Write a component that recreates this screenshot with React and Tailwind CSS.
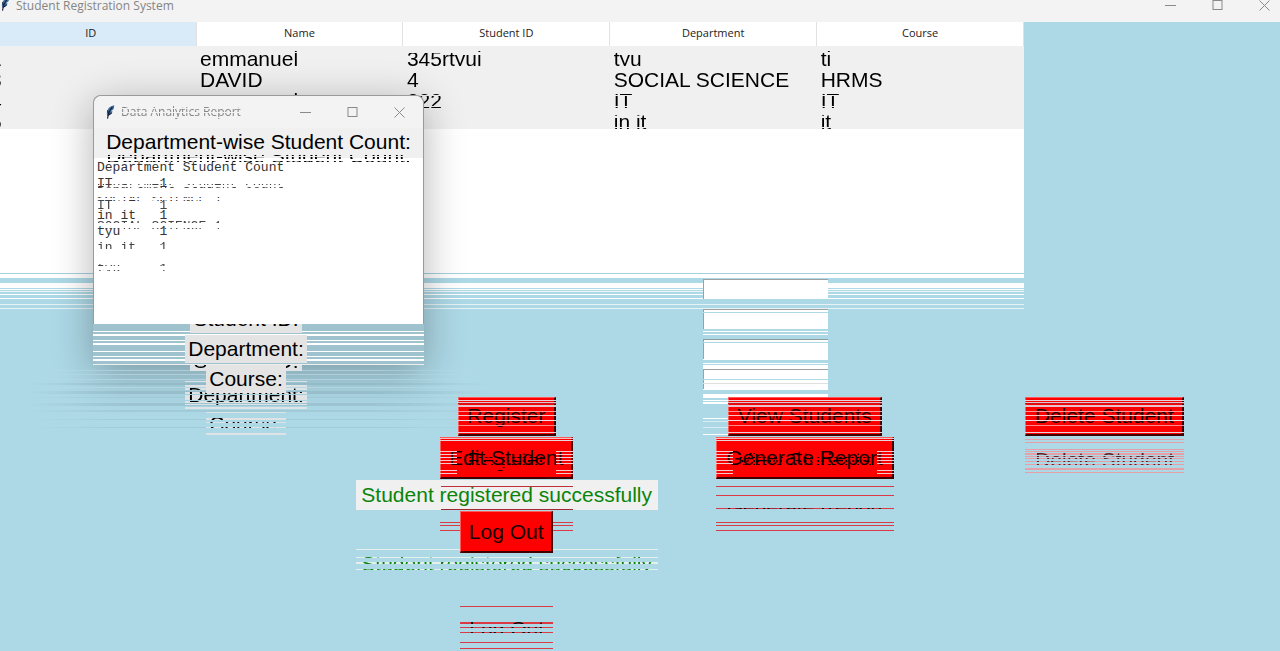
import React from "react";

const SKY = "#add8e6";

/* Keeps only the given [start, end] pixel bands of an element visible. */
function bands(list) {
  const stops = [];
  let at = 0;
  list.forEach(([a, b]) => {
    stops.push(`transparent ${at}px`, `transparent ${a}px`, `#000 ${a}px`, `#000 ${b}px`);
    at = b;
  });
  stops.push(`transparent ${at}px`);
  const image = `linear-gradient(to bottom, ${stops.join(", ")})`;
  return { maskImage: image, WebkitMaskImage: image };
}

/* Thin horizontal lines: rows of [y, height, colour]. */
function Lines({ className, rows }) {
  return (
    <svg aria-hidden="true" className={`pointer-events-none absolute ${className}`} shapeRendering="crispEdges">
      {rows.map(([y, h, fill], i) => (
        <rect key={i} x="0" y={y} width="100%" height={h} fill={fill} />
      ))}
    </svg>
  );
}

function Feather({ className }) {
  return (
    <svg aria-hidden="true" viewBox="0 0 12 16" className={className}>
      <path d="M11 0C7 1 4 3 3 6c-1 3-1 5 0 7l1-1c3-1 5-3 5-5L7 7l3-2c1-2 1-3 1-5z" fill="#3f6f9f" />
      <path d="M9 2C6 5 4 9 3 16M3 6l1 3M4 12l4-3" stroke="#14213a" strokeWidth="1.3" fill="none" />
    </svg>
  );
}

function WindowControls({ className }) {
  const icon = "block size-[11px]";
  return (
    <div className={`flex gap-9 text-[#8a8a8a] ${className}`}>
      <button type="button" aria-label="Minimize">
        <svg viewBox="0 0 11 11" className={icon}><path d="M0 5.5h11" stroke="currentColor" /></svg>
      </button>
      <button type="button" aria-label="Maximize">
        <svg viewBox="0 0 11 11" className={icon}><rect x="1" y="0.5" width="9" height="9" stroke="currentColor" fill="none" /></svg>
      </button>
      <button type="button" aria-label="Close">
        <svg viewBox="0 0 11 11" className={icon}><path d="M0.5 0.5l10 10M10.5 0.5l-10 10" stroke="currentColor" fill="none" /></svg>
      </button>
    </div>
  );
}

const columns = ["ID", "Name", "Student ID", "Department", "Course"];
const students = [
  ["1", "emmanuel", "345rtyui", "tyu", "ti"],
  ["3", "DAVID", "4", "SOCIAL SCIENCE", "HRMS"],
  ["4", "emmanuel", "222", "IT", "IT"],
  ["5", "", "", "in it", "it"],
];
const rowBands = [
  [[3, 4], [5, 18]],
  [[0, 21]],
  [[1, 5], [6, 16], [17, 18], [19, 20]],
  [[0, 3], [4, 16], [17, 18]],
];

function StudentTable() {
  return (
    <div className="relative w-4/5">
      <div className="h-[251px] overflow-hidden bg-white">
        <table className="-ml-[14px] w-[calc(100%+14px)] table-fixed border-collapse">
          <colgroup>
            <col className="w-[210px]" />
            <col /><col /><col /><col />
          </colgroup>
          <thead>
            <tr className="h-[25px]">
              {columns.map((c, i) => (
                <th
                  key={c}
                  className={`border-r border-b-2 border-r-[#e2e2e2] border-b-[#f0f0f0] p-0 pb-[2px] text-center font-['Open_Sans',sans-serif] text-[11px] leading-[20px] font-normal text-[#222] ${i === 0 ? "bg-[#d9ebf9]" : "bg-white"}`}
                >
                  {c}
                </th>
              ))}
            </tr>
          </thead>
          <tbody className="bg-[#f0f0f0]">
            {students.map((row, r) => (
              <tr key={r}>
                {row.map((cell, c) => (
                  <td key={c} className="p-0 pl-1 text-[21px] leading-[21px] whitespace-nowrap">
                    <span className={`block ${r === 3 ? "h-[18px]" : "h-[21px]"}`} style={bands(rowBands[r])}>{cell}</span>
                  </td>
                ))}
              </tr>
            ))}
          </tbody>
        </table>
      </div>
      <Lines
        className="top-full left-0 h-9 w-full"
        rows={[[0, 1, "#a3d0df"], [1, 4, "#fff"], [10, 5, "#fff"], [16, 1, "#fff"], [18, 1, "#eef6f9"], [21, 1, "#fff"], [25, 1, "#fff"], [31, 1, "#e6f2f6"], [35, 1, "#e6f2f6"]]}
      />
    </div>
  );
}

function FieldLabel({ id, children, slices, echo }) {
  return (
    <label
      htmlFor={id}
      className="relative flex h-7 items-center justify-self-center bg-[#e4e4e4] px-[3px] text-[21px] leading-6"
    >
      {children}
      {slices && (
        <span
          aria-hidden="true"
          className={`absolute left-0 flex h-7 w-full items-center bg-[#dfe3e5] px-[3px] ${echo}`}
          style={bands(slices)}
        >
          {children}
        </span>
      )}
    </label>
  );
}

function Field({ id, lines }) {
  return (
    <div className="relative flex h-7 w-[125px] items-center justify-self-center">
      <input id={id} className="h-5 w-full border-t border-l border-[#a0a0a0] bg-white px-1 outline-none" />
      {lines && <Lines className="top-0 left-0 h-20 w-full" rows={lines} />}
    </div>
  );
}

function Fields() {
  return (
    <div className="mt-[2px] grid grid-cols-[492fr_546fr_242fr] gap-y-[2px]">
      <FieldLabel id="name">Name:</FieldLabel>
      <Field id="name" />
      <span />
      <FieldLabel id="student-id" echo="top-[42px]" slices={[[18, 24]]}>Student ID:</FieldLabel>
      <Field id="student-id" lines={[[7, 1, SKY], [26, 1, "#fff"], [29, 1, "#fff"]]} />
      <span />
      <FieldLabel
        id="department"
        echo="top-[46px]"
        slices={[[0, 1], [4, 6], [7, 9], [11, 13], [14, 19], [20, 22], [23, 24], [26, 28]]}
      >
        Department:
      </FieldLabel>
      <Field id="department" lines={[[4, 1, "#8d9a9e"], [7, 1, SKY], [24, 1, "#fff"], [28, 1, "#fff"], [30, 4, "#fff"]]} />
      <span />
      <FieldLabel
        id="course"
        echo="top-[45px]"
        slices={[[2, 3], [8, 10], [12, 13], [17, 18], [23, 25], [29, 30]]}
      >
        Course:
      </FieldLabel>
      <Field
        id="course"
        lines={[[1, 3, "#fff"], [14, 1, SKY], [18, 1, "#e0e0e0"], [24, 1, "#fff"], [29, 4, "#fff"], [35, 1, "#fff"], [37, 2, "#fff"], [53, 1, "#fff"], [56, 1, "#d8ecf3"], [62, 1, "#d8ecf3"], [69, 1, "#fff"]]}
      />
      <span />
    </div>
  );
}

function ActionButton({ children, tall, width, lines, combs, echo, slices, faded }) {
  return (
    <div className={`relative flex justify-self-center ${width} ${tall ? "h-[42px]" : "h-[39px]"}`}>
      {slices && (
        <span
          aria-hidden="true"
          className={`absolute left-0 flex h-[42px] w-full items-center justify-center whitespace-nowrap ${echo} ${faded}`}
          style={bands(slices)}
        >
          {children}
        </span>
      )}
      <button
        type="button"
        className="relative w-full border-t border-r-2 border-b-2 border-l border-t-[#ff5a5a] border-r-[#400000] border-b-[#400000] border-l-[#ff5a5a] bg-[#ff0000] text-[21px] leading-6 whitespace-nowrap text-[#1a0000]"
      >
        {children}
      </button>
      {lines && <Lines className="top-0 left-0 h-full w-full" rows={lines} />}
      {combs && <Lines className="top-0 left-0 h-full w-[17px]" rows={combs} />}
      {combs && <Lines className="top-0 right-0 h-full w-[17px]" rows={combs} />}
    </div>
  );
}

const topLines = [
  [3, 1, "#e6d3da"], [5, 1, "#e6c3cc"], [6, 1, "#c01820"], [8, 2, "#e6c3cc"], [14, 1, "#ff9a9a"], [18, 1, "#ffc4c4"],
  [23, 1, "#f3dde2"], [28, 1, "#ff8a8a"], [35, 1, "#e6d3da"],
];
const tallLines = [[1, 1, "#f3c3c8"], [3, 1, "#e8d5da"]];
const combLines = [[14, 1, "#f4c9ce"], [17, 1, "#f4c9ce"], [20, 1, "#e8d5da"], [23, 1, "#f4c9ce"], [26, 1, "#f4c9ce"], [33, 1, "#f4c9ce"], [36, 1, "#f4c9ce"]];
const farSlices = [[7, 8], [16, 17], [29, 30], [43, 44], [46, 47], [51, 52]];

function EchoText({ children, className, slices }) {
  return (
    <span
      aria-hidden="true"
      className={`pointer-events-none absolute left-0 z-10 flex h-6 w-full items-center justify-center text-[21px] leading-6 whitespace-nowrap ${className}`}
      style={bands(slices)}
    >
      {children}
    </span>
  );
}

const midSlices = [[5, 7], [9, 10], [12, 14], [16, 17], [19, 20], [22, 23]];

function Actions() {
  return (
    <div className="mt-1 grid grid-cols-[221fr_298fr_296fr_306fr] gap-y-px pr-[1.8%] pl-[10.6%]">
      <span />
      <div className="relative grid">
        <ActionButton width="w-[98px]" lines={topLines}>Register</ActionButton>
        <EchoText className="top-[51px]" slices={midSlices}>Register</EchoText>
      </div>
      <div className="relative grid">
        <ActionButton width="w-[154px]" lines={topLines}>View Students</ActionButton>
        <EchoText className="top-[51px]" slices={midSlices}>View Students</EchoText>
      </div>
      <ActionButton
        width="w-[159px]"
        lines={topLines}
        echo="top-[42px]"
        faded="bg-[#e8a0a8] text-[21px] text-[#5a2028]"
        slices={[[0, 1], [3, 4], [10, 11], [12, 13], [14, 16], [17, 18], [19, 20], [22, 23], [25, 26], [29, 31], [33, 34]]}
      >
        Delete Student
      </ActionButton>

      <span />
      <ActionButton
        tall
        width="w-[133px]"
        lines={tallLines}
        combs={combLines}
        echo="top-[42px]"
        faded="h-[56px] bg-[#d93a44] text-[21px]"
        slices={farSlices}
      >
        Edit Student
      </ActionButton>
      <ActionButton
        tall
        width="w-[178px]"
        lines={tallLines}
        combs={combLines}
        echo="top-[42px]"
        faded="h-[56px] bg-[#d93a44] text-[21px]"
        slices={farSlices}
      >
        Generate Report
      </ActionButton>
      <span />

      <span />
      <div className="relative justify-self-center">
        <p role="status" className="relative h-[30px] w-[302px] bg-[#f0f0f0] text-center text-[21px] leading-[30px] whitespace-nowrap text-[#0a850a]">
          Student registered successfully
        </p>
        <Lines className="top-0 left-[85px] h-[30px] w-[132px]" rows={[[6, 1, "#c03038"], [29, 1, "#a02830"]]} />
        <p
          aria-hidden="true"
          className="absolute top-[69px] left-0 h-[30px] w-[302px] bg-[#e4f0ee] text-center text-[21px] leading-[30px] whitespace-nowrap text-[#0a850a]"
          style={bands([[0, 1], [8, 9], [13, 15], [20, 21]])}
        >
          Student registered successfully
        </p>
      </div>
      <span />
      <span />

      <span />
      <ActionButton
        tall
        width="w-[93px]"
        echo="top-[93px]"
        faded="h-[50px] bg-[#d93a44] text-[21px]"
        slices={[[2, 3], [18, 20], [23, 24], [28, 29], [38, 39], [44, 45]]}
      >
        Log Out
      </ActionButton>
      <span />
      <span />
    </div>
  );
}

const report = [
  "Department Student Count",
  "IT      1",
  "SOCIAL SCIENCE 1",
  "in it   1",
  "tyu     1",
].join("\n");

function ReportWindow() {
  return (
    <section aria-label="Data Analytics Report" className="absolute top-[95px] left-[93px] z-20 w-[331px] rounded-t-lg border border-b-0 border-[#9a9a9a] bg-[#f0f0f0]">
      <div className="flex h-8 items-center rounded-t-lg bg-[#f3f3f3] pr-[18px] pl-[11px]">
        <Feather className="h-4 w-[10px]" />
        <h2 className="ml-[6px] font-['Open_Sans',sans-serif] text-[12px] leading-4 text-[#858585]" style={bands([[0, 4], [5, 8], [9, 13], [14, 16]])}>
          Data Analytics Report
        </h2>
        <WindowControls className="ml-auto" />
      </div>
      <div className="h-[30px] overflow-hidden text-center text-[21px] leading-[28px] whitespace-nowrap">
        Department-wise Student Count:
      </div>
      <div className="relative">
        <textarea
          readOnly
          aria-label="Department-wise student count"
          defaultValue={report}
          className="block h-[166px] w-full resize-none overflow-hidden bg-white px-[3px] pt-[2px] font-['Liberation_Mono',monospace] text-[13px] leading-4 whitespace-pre text-[#333] outline-none"
        />
        <Lines className="top-[34px] left-0 h-4 w-full" rows={[[0, 5, "#fff"], [6, 2, "#fff"], [9, 7, "#fff"]]} />
        <pre
          aria-hidden="true"
          className="pointer-events-none absolute top-4 left-0 px-[3px] font-['Liberation_Mono',monospace] text-[13px] leading-[21px] text-[#444]"
          style={bands([[10, 11], [13, 14], [26, 36], [47, 49], [54, 55], [67, 75], [90, 92], [96, 97]])}
        >
          {report}
        </pre>
        <span
          aria-hidden="true"
          className="absolute -top-[14px] left-0 w-full text-center text-[21px] leading-6 whitespace-nowrap"
          style={bands([[11, 12], [13, 15], [17, 18]])}
        >
          Department-wise Student Count:
        </span>
      </div>
    </section>
  );
}

function ReportFrame() {
  return (
    <div aria-hidden="true" className="absolute top-[95px] left-[93px] h-[270px] w-[331px] rounded-lg bg-[#9fc2cf] shadow-[0_8px_40px_rgba(0,0,0,0.3)]">
      <Lines
        className="bottom-0 left-0 h-10 w-full"
        rows={[[6, 1, "#fff"], [9, 2, "#fff"], [15, 1, "#fff"], [18, 2, "#fff"], [26, 1, "#fff"], [31, 1, "#fff"], [34, 2, "#fff"], [39, 1, "#eee"]]}
      />
      <Lines
        className="top-full -left-16 h-20 w-[460px] [mask-image:linear-gradient(to_right,transparent,#000_20%,#000_75%,transparent)] opacity-60"
        rows={[[5, 1, "#c2dfe9"], [9, 1, "#c2dfe9"], [14, 1, "#c2dfe9"], [18, 2, "#8fb4c1"], [22, 1, "#c2dfe9"], [26, 3, "#8fb4c1"], [32, 1, "#9cc3d0"], [38, 3, "#94bac7"], [45, 2, "#9cc3d0"], [54, 1, "#9cc3d0"], [62, 1, "#9cc3d0"]]}
      />
    </div>
  );
}

export default function App() {
  return (
    <div className="relative flex min-h-screen flex-col overflow-hidden bg-[#add8e6] font-['Liberation_Sans',Arial,sans-serif] text-black">
      <header className="flex h-[22px] items-start bg-[#f3f3f3] pr-[10px]">
        <Feather className="-mt-1 h-4 w-[10px]" />
        <h1 className="ml-[6px] font-['Open_Sans',sans-serif] text-[12px] leading-3 text-[#858585]">
          Student Registration System
        </h1>
        <WindowControls className="ml-auto" />
      </header>
      <main className="flex-1">
        <StudentTable />
        <ReportFrame />
        <div className="relative z-10">
          <Fields />
          <Actions />
        </div>
      </main>
      <ReportWindow />
    </div>
  );
}
